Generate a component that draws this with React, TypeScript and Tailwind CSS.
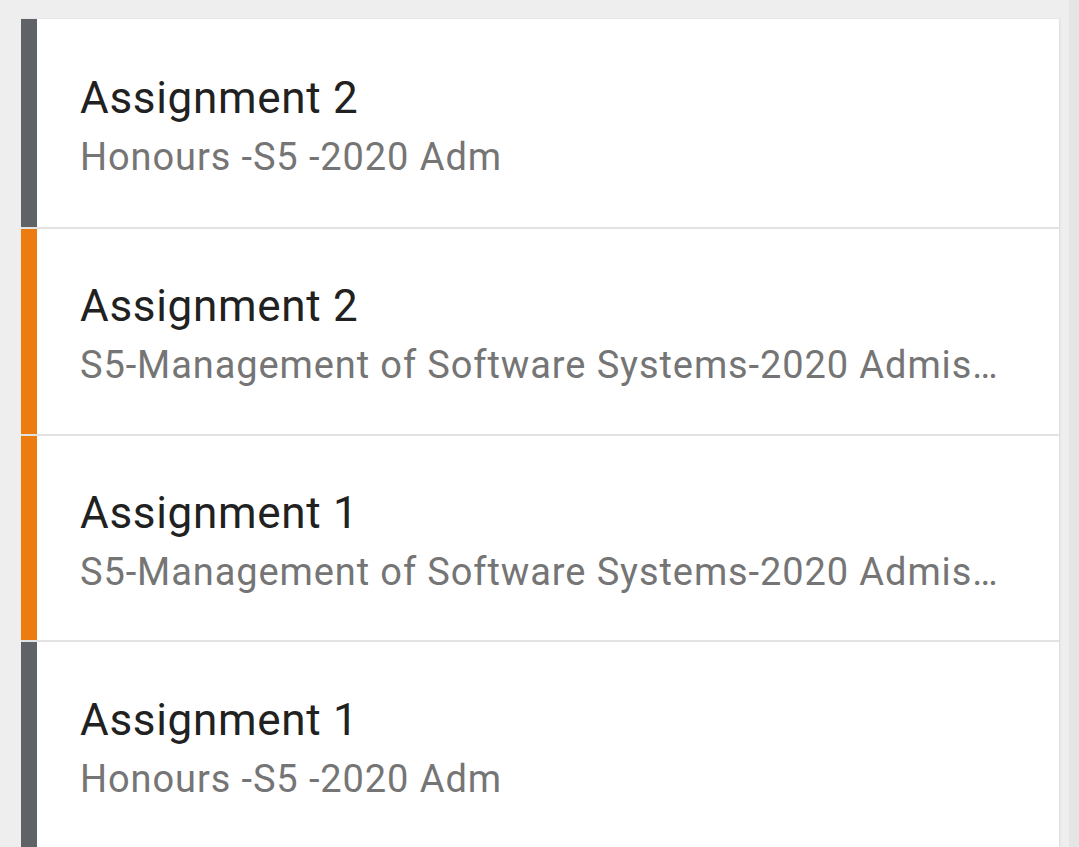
import React from 'react';

type Item = { title: string; subtitle: string; accent: 'gray' | 'orange'; h: string };

const items: Item[] = [
  { title: 'Assignment 2', subtitle: 'Honours -S5 -2020 Adm', accent: 'gray', h: 'h-[208px] pt-[4px]' },
  { title: 'Assignment 2', subtitle: 'S5-Management of Software Systems-2020 Admission', accent: 'orange', h: 'h-[205px] pt-[3px]' },
  { title: 'Assignment 1', subtitle: 'S5-Management of Software Systems-2020 Admission', accent: 'orange', h: 'h-[204px] pt-[4px]' },
  { title: 'Assignment 1', subtitle: 'Honours -S5 -2020 Adm', accent: 'gray', h: 'h-[205px] pt-[5px]' },
];

function Row({ item }: { item: Item }) {
  return (
    <div className="flex border-b-2 border-[#e2e2e2]">
      <div className={item.accent === 'orange' ? 'w-4 shrink-0 bg-[#ec7b10]' : 'w-4 shrink-0 bg-[#5f6368]'} />
      <div className={`flex min-w-0 flex-1 flex-col justify-center pl-[43px] pr-[54px] ${item.h}`}>
        <div className="truncate text-[44px] leading-[60px] tracking-[0.7px] text-[#212121]">{item.title}</div>
        <div className="mt-[3px] truncate text-[38px] leading-[52px] tracking-[0.9px] text-[#757575]">{item.subtitle}</div>
      </div>
    </div>
  );
}

export default function App() {
  return (
    <div className="flex h-[847px] overflow-hidden bg-[#eeeeee] pt-[19px] font-['Roboto',sans-serif]">
      <div className="ml-[21px] w-[1038px] shrink-0 bg-white shadow-[1px_0_2px_rgba(0,0,0,0.08)]">
        {items.map((item, i) => (
          <Row key={i} item={item} />
        ))}
      </div>
      <div className="ml-[10px] -mt-[19px] w-[10px] bg-[#e5e5e5]" />
    </div>
  );
}
